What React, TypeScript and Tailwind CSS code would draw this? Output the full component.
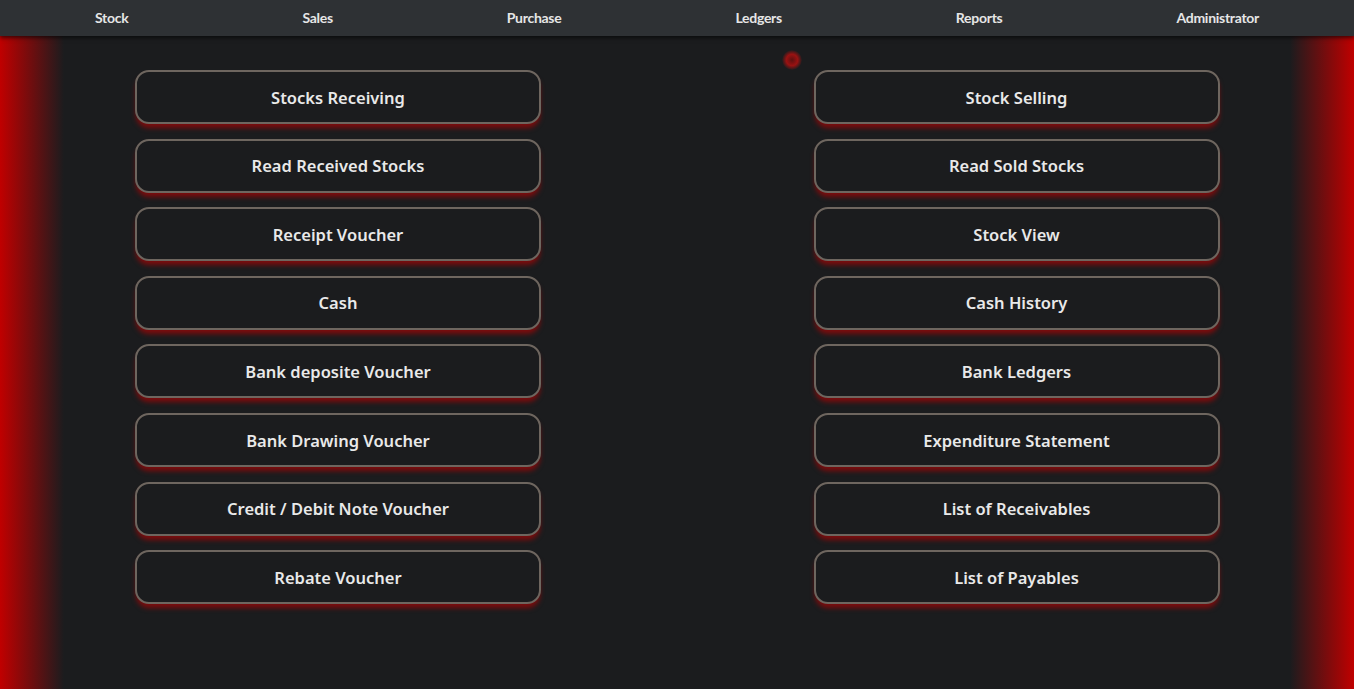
const navItems = ["Stock", "Sales", "Purchase", "Ledgers", "Reports", "Administrator"];

const leftButtons = [
  "Stocks Receiving",
  "Read Received Stocks",
  "Receipt Voucher",
  "Cash",
  "Bank deposite Voucher",
  "Bank Drawing Voucher",
  "Credit / Debit Note Voucher",
  "Rebate Voucher",
];

const rightButtons = [
  "Stock Selling",
  "Read Sold Stocks",
  "Stock View",
  "Cash History",
  "Bank Ledgers",
  "Expenditure Statement",
  "List of Receivables",
  "List of Payables",
];

function MenuButton({ label }: { label: string }) {
  return (
    <button className="w-[406px] h-[54px] pt-[2px] rounded-[14px] border-2 border-[#6e665f] bg-[#1b1c1e] text-[#e9e9e9] text-[16.5px] font-semibold shadow-[0_5px_5px_-1px_rgba(190,0,0,0.6)] [font-family:'Noto_Sans',sans-serif]">
      {label}
    </button>
  );
}

export default function App() {
  return (
    <div className="h-[689px] overflow-hidden relative bg-[linear-gradient(to_right,#c00000_0px,#1b1c1e_64px,#1b1c1e_calc(100%-64px),#c00000_100%)]">
      <nav className="h-9 bg-[#2e3134] shadow-[0_2px_4px_rgba(0,0,0,0.6)] flex items-center justify-between px-[95px] relative z-10 [font-family:Lato,sans-serif]">
        {navItems.map((item) => (
          <span key={item} className="text-[#e6e6e6] text-sm font-bold tracking-[-0.02em]">
            {item}
          </span>
        ))}
      </nav>

      <span className="absolute left-[782px] top-[50px] w-5 h-5 rounded-full bg-[radial-gradient(circle,#5e1010_0%,#9a1212_40%,rgba(154,18,18,0)_72%)]" />

      <main className="grid grid-cols-2 pt-[34px]">
        <div className="flex flex-col items-center gap-[14.6px] pr-[1px]">
          {leftButtons.map((b) => (
            <MenuButton key={b} label={b} />
          ))}
        </div>
        <div className="flex flex-col items-center gap-[14.6px] pl-[2px]">
          {rightButtons.map((b) => (
            <MenuButton key={b} label={b} />
          ))}
        </div>
      </main>
    </div>
  );
}
